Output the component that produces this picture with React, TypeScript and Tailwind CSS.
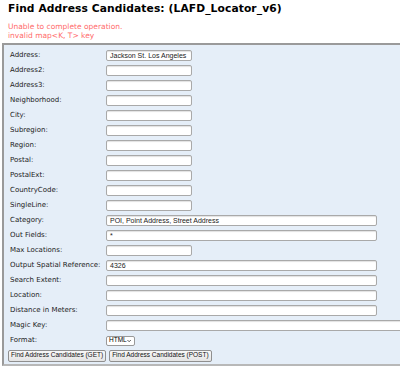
import React from "react";

type Row = { label: string; value?: string; size: "s" | "l" | "xl" };

const rows: Row[] = [
  { label: "Address:", value: "Jackson St. Los Angeles", size: "s" },
  { label: "Address2:", size: "s" },
  { label: "Address3:", size: "s" },
  { label: "Neighborhood:", size: "s" },
  { label: "City:", size: "s" },
  { label: "Subregion:", size: "s" },
  { label: "Region:", size: "s" },
  { label: "Postal:", size: "s" },
  { label: "PostalExt:", size: "s" },
  { label: "CountryCode:", size: "s" },
  { label: "SingleLine:", size: "s" },
  { label: "Category:", value: "POI, Point Address, Street Address", size: "l" },
  { label: "Out Fields:", value: "*", size: "l" },
  { label: "Max Locations:", size: "s" },
  { label: "Output Spatial Reference:", value: "4326", size: "l" },
  { label: "Search Extent:", size: "l" },
  { label: "Location:", size: "l" },
  { label: "Distance in Meters:", size: "l" },
  { label: "Magic Key:", size: "xl" },
];

function Field({ value, size }: { value?: string; size: Row["size"] }) {
  const w = size === "s" ? "w-[86px]" : size === "l" ? "w-[271px]" : "w-[330px]";
  return (
    <div
      className={`${w} h-[11px] shrink-0 bg-white border border-[#a9a9a9] rounded-[2px] shadow-[inset_0_1px_1px_rgba(0,0,0,0.12)] flex items-center pl-[3px] text-[7px] leading-none text-[#222] font-['Liberation_Sans',Arial,sans-serif]`}
    >
      {value}
    </div>
  );
}

export default function App() {
  return (
    <div className="w-[400px] h-[368px] overflow-hidden bg-white font-['DejaVu_Sans',Verdana,sans-serif] text-black">
      <div className="w-[440px]">
        <div className="pl-[8px] pt-[2px] text-[10.7px] font-bold leading-[14px] tracking-[0.1px]">
          Find Address Candidates: (LAFD_Locator_v6)
        </div>
        <div className="pl-[8px] pt-[6px] text-[7.5px] leading-[9px] text-[#ff6b6b]">
          <div>Unable to complete operation.</div>
          <div>invalid map&lt;K, T&gt; key</div>
        </div>
        <div className="ml-[2px] mt-[3px] border-2 border-t-[#9a9a9a] border-l-[#9a9a9a] border-r-[#d8d8d8] border-b-[#b8b8b8] bg-[#e5eef8] pl-[4px] pt-[3px] pb-[1px]">
          {rows.map((r) => (
            <div key={r.label} className="flex items-center h-[15px]">
              <div className="w-[98px] shrink-0 pl-[2px] text-[7px] leading-none text-[#222]">
                {r.label}
              </div>
              <Field value={r.value} size={r.size} />
            </div>
          ))}
          <div className="flex items-center h-[15px]">
            <div className="w-[98px] shrink-0 pl-[2px] text-[7px] leading-none text-[#222]">
              Format:
            </div>
            <div className="h-[10px] w-[29px] bg-white border border-[#999] rounded-[2px] flex items-center justify-between pl-[2px] pr-[3px] text-[6.5px] leading-none font-['Liberation_Sans',Arial,sans-serif]">
              <span>HTML</span>
              <svg width="6" height="4" viewBox="0 0 6 4">
                <path d="M0.7 0.7 L3 3 L5.3 0.7" fill="none" stroke="#222" strokeWidth="1.1" />
              </svg>
            </div>
          </div>
          <div className="flex items-center h-[15px] gap-[3px]">
            <div className="h-[12px] px-[2px] border border-[#8f8f8f] rounded-[2px] bg-gradient-to-b from-[#f8f8f8] to-[#e4e4e4] flex items-center text-[6.5px] leading-none text-[#111] font-['Liberation_Sans',Arial,sans-serif]">
              Find Address Candidates (GET)
            </div>
            <div className="h-[12px] px-[2px] border border-[#8f8f8f] rounded-[2px] bg-gradient-to-b from-[#f8f8f8] to-[#e4e4e4] flex items-center text-[6.5px] leading-none text-[#111] font-['Liberation_Sans',Arial,sans-serif]">
              Find Address Candidates (POST)
            </div>
          </div>
        </div>
      </div>
    </div>
  );
}
